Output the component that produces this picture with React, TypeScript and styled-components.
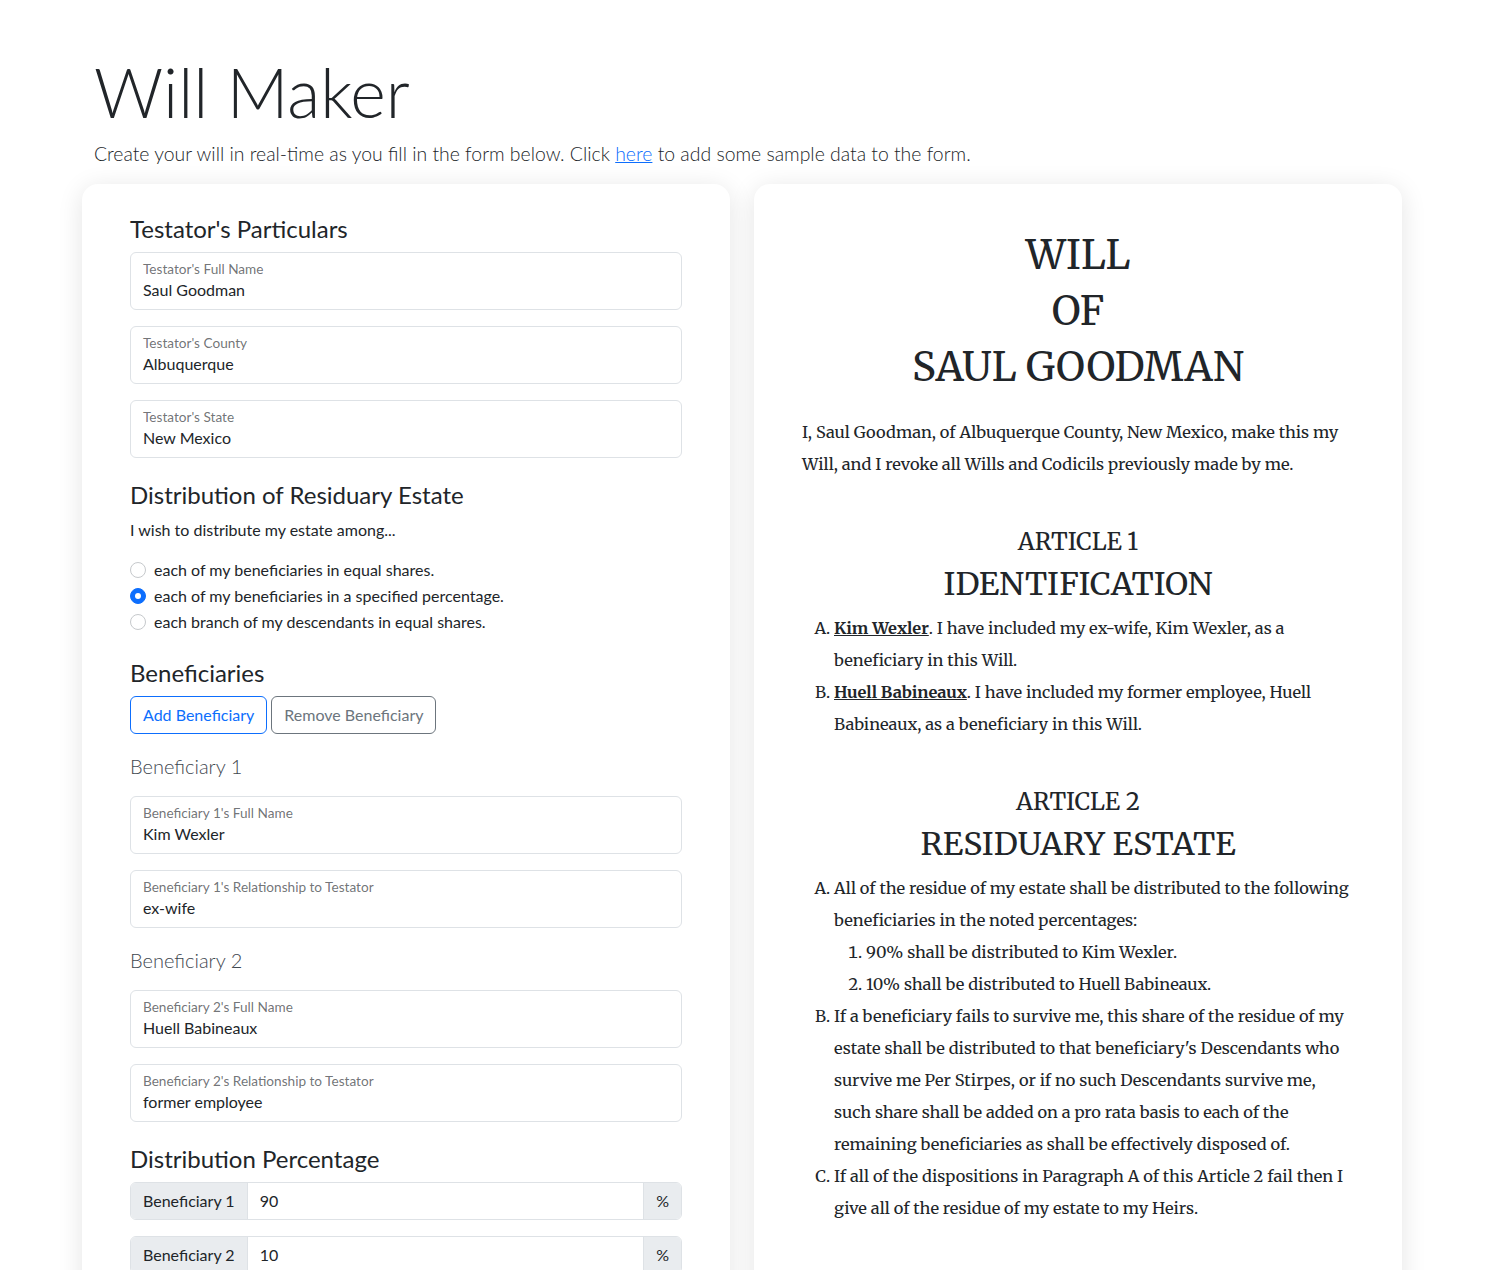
import styled, { createGlobalStyle } from "styled-components";

const GlobalStyle = createGlobalStyle`
  html, body {
    margin: 0;
    padding: 0;
    background: #fff;
  }
  body {
    font-family: Lato, "Noto Sans", sans-serif;
    font-size: 16px;
    line-height: 1.5;
    color: #212529;
    -webkit-font-smoothing: antialiased;
  }
  * {
    box-sizing: border-box;
  }
`;

const Page = styled.div`
  width: 1402px;
  padding: 51px 0 0 82px;
`;

const Header = styled.header`
  padding: 0 12px;
`;

const Title = styled.h1`
  margin: 0 0 7px;
  font-size: 68px;
  font-weight: 300;
  line-height: 81px;
`;

const Lead = styled.p`
  margin: 0 0 16px;
  font-size: 19.4px;
  font-weight: 300;
  line-height: 29px;
  white-space: nowrap;

  a {
    color: #0d6efd;
    text-decoration: underline;
  }
`;

const Columns = styled.div`
  display: grid;
  grid-template-columns: 648px 648px;
  gap: 24px;
  align-items: start;
`;

const Card = styled.section<{ $top: number }>`
  display: flex;
  flex-direction: column;
  background: #fff;
  border-radius: 16px;
  box-shadow: 0 4px 26px rgba(0, 0, 0, 0.11);
  padding: ${(p) => p.$top}px 48px 48px;
  min-height: 1140px;
`;

/* ---------- form side ---------- */

const SectionTitle = styled.h4<{ $first?: boolean }>`
  margin: ${(p) => (p.$first ? 0 : 6)}px 0 9px;
  font-size: 24px;
  font-weight: 400;
  line-height: 29px;
`;

const Field = styled.div`
  display: flex;
  flex-direction: column;
  height: 58px;
  margin-bottom: 16px;
  padding: 7px 12px;
  border: 1px solid #dee2e6;
  border-radius: 6px;
`;

const FieldLabel = styled.span`
  font-size: 13.6px;
  line-height: 18px;
  color: rgba(33, 37, 41, 0.65);
`;

const FieldValue = styled.span`
  font-size: 16px;
  line-height: 24px;
`;

const Prompt = styled.p`
  margin: 0 0 16px;
`;

const RadioList = styled.div`
  margin-bottom: 16px;
`;

const RadioRow = styled.label`
  display: flex;
  align-items: center;
  gap: 8px;
  height: 24px;
  margin-bottom: 2px;
`;

const RadioDot = styled.span<{ $checked?: boolean }>`
  width: 16px;
  height: 16px;
  border-radius: 50%;
  border: 1px solid ${(p) => (p.$checked ? "#0d6efd" : "#c6c9cc")};
  background: ${(p) => (p.$checked ? "#0d6efd" : "#fff")};
  display: grid;
  place-items: center;

  &::after {
    content: "";
    width: 6px;
    height: 6px;
    border-radius: 50%;
    background: ${(p) => (p.$checked ? "#fff" : "transparent")};
  }
`;

const ButtonRow = styled.div`
  display: flex;
  gap: 4px;
  margin-bottom: 16px;
`;

const OutlineButton = styled.button<{ $tone: "primary" | "secondary" }>`
  font-family: inherit;
  font-size: 16px;
  line-height: 24px;
  padding: 6px 12px;
  background: #fff;
  border-radius: 6px;
  border: 1px solid ${(p) => (p.$tone === "primary" ? "#0d6efd" : "#6c757d")};
  color: ${(p) => (p.$tone === "primary" ? "#0d6efd" : "#6c757d")};
`;

const BeneficiaryBlock = styled.div`
  display: flex;
  flex-direction: column;
`;

const BeneficiaryTitle = styled.h5`
  margin: 4px 0 18px;
  font-size: 20px;
  font-weight: 300;
  line-height: 24px;
  color: #3f4850;
`;

const InputGroup = styled.div`
  display: flex;
  height: 38px;
  margin-bottom: 16px;
  border: 1px solid #dee2e6;
  border-radius: 6px;
  overflow: hidden;
`;

const Addon = styled.span`
  display: flex;
  align-items: center;
  padding: 0 12px;
  background: #e9ecef;
  line-height: 24px;
`;

const GroupInput = styled.span`
  flex: 1;
  display: flex;
  align-items: center;
  padding: 0 12px;
  border-left: 1px solid #dee2e6;
  border-right: 1px solid #dee2e6;
`;

/* ---------- will side ---------- */

const Will = styled.div`
  font-family: Merriweather, "DejaVu Serif", serif;
  font-size: 16.4px;
  line-height: 32px;
  color: #212529;
`;

const WillTitle = styled.h1`
  margin: 0 0 21px;
  font-size: 40px;
  font-weight: 400;
  line-height: 56px;
  text-align: center;
`;

const Intro = styled.p`
  margin: 0;
`;

const Article = styled.div`
  margin-top: 47px;
  text-align: center;
`;

const ArticleNumber = styled.h4`
  margin: 0 0 9px;
  font-size: 24px;
  font-weight: 400;
  line-height: 29px;
`;

const ArticleName = styled.h2`
  margin: 0 0 9px;
  font-size: 32px;
  font-weight: 400;
  line-height: 38px;
`;

const Clauses = styled.ol`
  margin: 0;
  padding-left: 32px;
  list-style-type: upper-alpha;
  text-align: left;
`;

const SubClauses = styled.ol`
  margin: 0;
  padding-left: 32px;
  list-style-type: decimal;
`;

const Name = styled.u`
  font-weight: 700;
`;

const testator = [
  { label: "Testator's Full Name", value: "Saul Goodman" },
  { label: "Testator's County", value: "Albuquerque" },
  { label: "Testator's State", value: "New Mexico" },
];

const options = [
  "each of my beneficiaries in equal shares.",
  "each of my beneficiaries in a specified percentage.",
  "each branch of my descendants in equal shares.",
];

const beneficiaries = [
  { name: "Kim Wexler", relation: "ex-wife", pct: 90 },
  { name: "Huell Babineaux", relation: "former employee", pct: 10 },
];

export default function App() {
  return (
    <>
      <GlobalStyle />
      <Page>
        <Header>
          <Title>Will Maker</Title>
          <Lead>
            Create your will in real-time as you fill in the form below. Click <a href="#">here</a> to add
            some sample data to the form.
          </Lead>
        </Header>
        <Columns>
          <Card $top={30}>
            <SectionTitle $first>Testator's Particulars</SectionTitle>
            {testator.map((f) => (
              <Field key={f.label}>
                <FieldLabel>{f.label}</FieldLabel>
                <FieldValue>{f.value}</FieldValue>
              </Field>
            ))}

            <SectionTitle>Distribution of Residuary Estate</SectionTitle>
            <Prompt>I wish to distribute my estate among...</Prompt>
            <RadioList>
              {options.map((o, i) => (
                <RadioRow key={o}>
                  <RadioDot $checked={i === 1} />
                  {o}
                </RadioRow>
              ))}
            </RadioList>

            <SectionTitle>Beneficiaries</SectionTitle>
            <ButtonRow>
              <OutlineButton $tone="primary">Add Beneficiary</OutlineButton>
              <OutlineButton $tone="secondary">Remove Beneficiary</OutlineButton>
            </ButtonRow>
            {beneficiaries.map((b, i) => (
              <BeneficiaryBlock key={b.name}>
                <BeneficiaryTitle>Beneficiary {i + 1}</BeneficiaryTitle>
                <Field>
                  <FieldLabel>Beneficiary {i + 1}'s Full Name</FieldLabel>
                  <FieldValue>{b.name}</FieldValue>
                </Field>
                <Field>
                  <FieldLabel>Beneficiary {i + 1}'s Relationship to Testator</FieldLabel>
                  <FieldValue>{b.relation}</FieldValue>
                </Field>
              </BeneficiaryBlock>
            ))}

            <SectionTitle>Distribution Percentage</SectionTitle>
            {beneficiaries.map((b, i) => (
              <InputGroup key={b.name}>
                <Addon>Beneficiary {i + 1}</Addon>
                <GroupInput>{b.pct}</GroupInput>
                <Addon>%</Addon>
              </InputGroup>
            ))}
          </Card>

          <Card $top={43}>
            <Will>
              <WillTitle>
                WILL
                <br />
                OF
                <br />
                SAUL GOODMAN
              </WillTitle>
              <Intro>
                I, Saul Goodman, of Albuquerque County, New Mexico, make this my Will, and I revoke all Wills and
                Codicils previously made by me.
              </Intro>

              <Article>
                <ArticleNumber>ARTICLE 1</ArticleNumber>
                <ArticleName>IDENTIFICATION</ArticleName>
                <Clauses>
                  <li>
                    <Name>Kim Wexler</Name>. I have included my ex-wife, Kim Wexler, as a beneficiary in this Will.
                  </li>
                  <li>
                    <Name>Huell Babineaux</Name>. I have included my former employee, Huell Babineaux, as a
                    beneficiary in this Will.
                  </li>
                </Clauses>
              </Article>

              <Article>
                <ArticleNumber>ARTICLE 2</ArticleNumber>
                <ArticleName>RESIDUARY ESTATE</ArticleName>
                <Clauses>
                  <li>
                    All of the residue of my estate shall be distributed to the following beneficiaries in the noted
                    percentages:
                    <SubClauses>
                      {beneficiaries.map((b) => (
                        <li key={b.name}>
                          {b.pct}% shall be distributed to {b.name}.
                        </li>
                      ))}
                    </SubClauses>
                  </li>
                  <li>
                    If a beneficiary fails to survive me, this share of the residue of my estate shall be
                    distributed to that beneficiary's Descendants who survive me Per Stirpes, or if no such
                    Descendants survive me, such share shall be added on a pro rata basis to each of the remaining
                    beneficiaries as shall be effectively disposed of.
                  </li>
                  <li>
                    If all of the dispositions in Paragraph A of this Article 2 fail then I give all of the residue
                    of my estate to my Heirs.
                  </li>
                </Clauses>
              </Article>
            </Will>
          </Card>
        </Columns>
      </Page>
    </>
  );
}
